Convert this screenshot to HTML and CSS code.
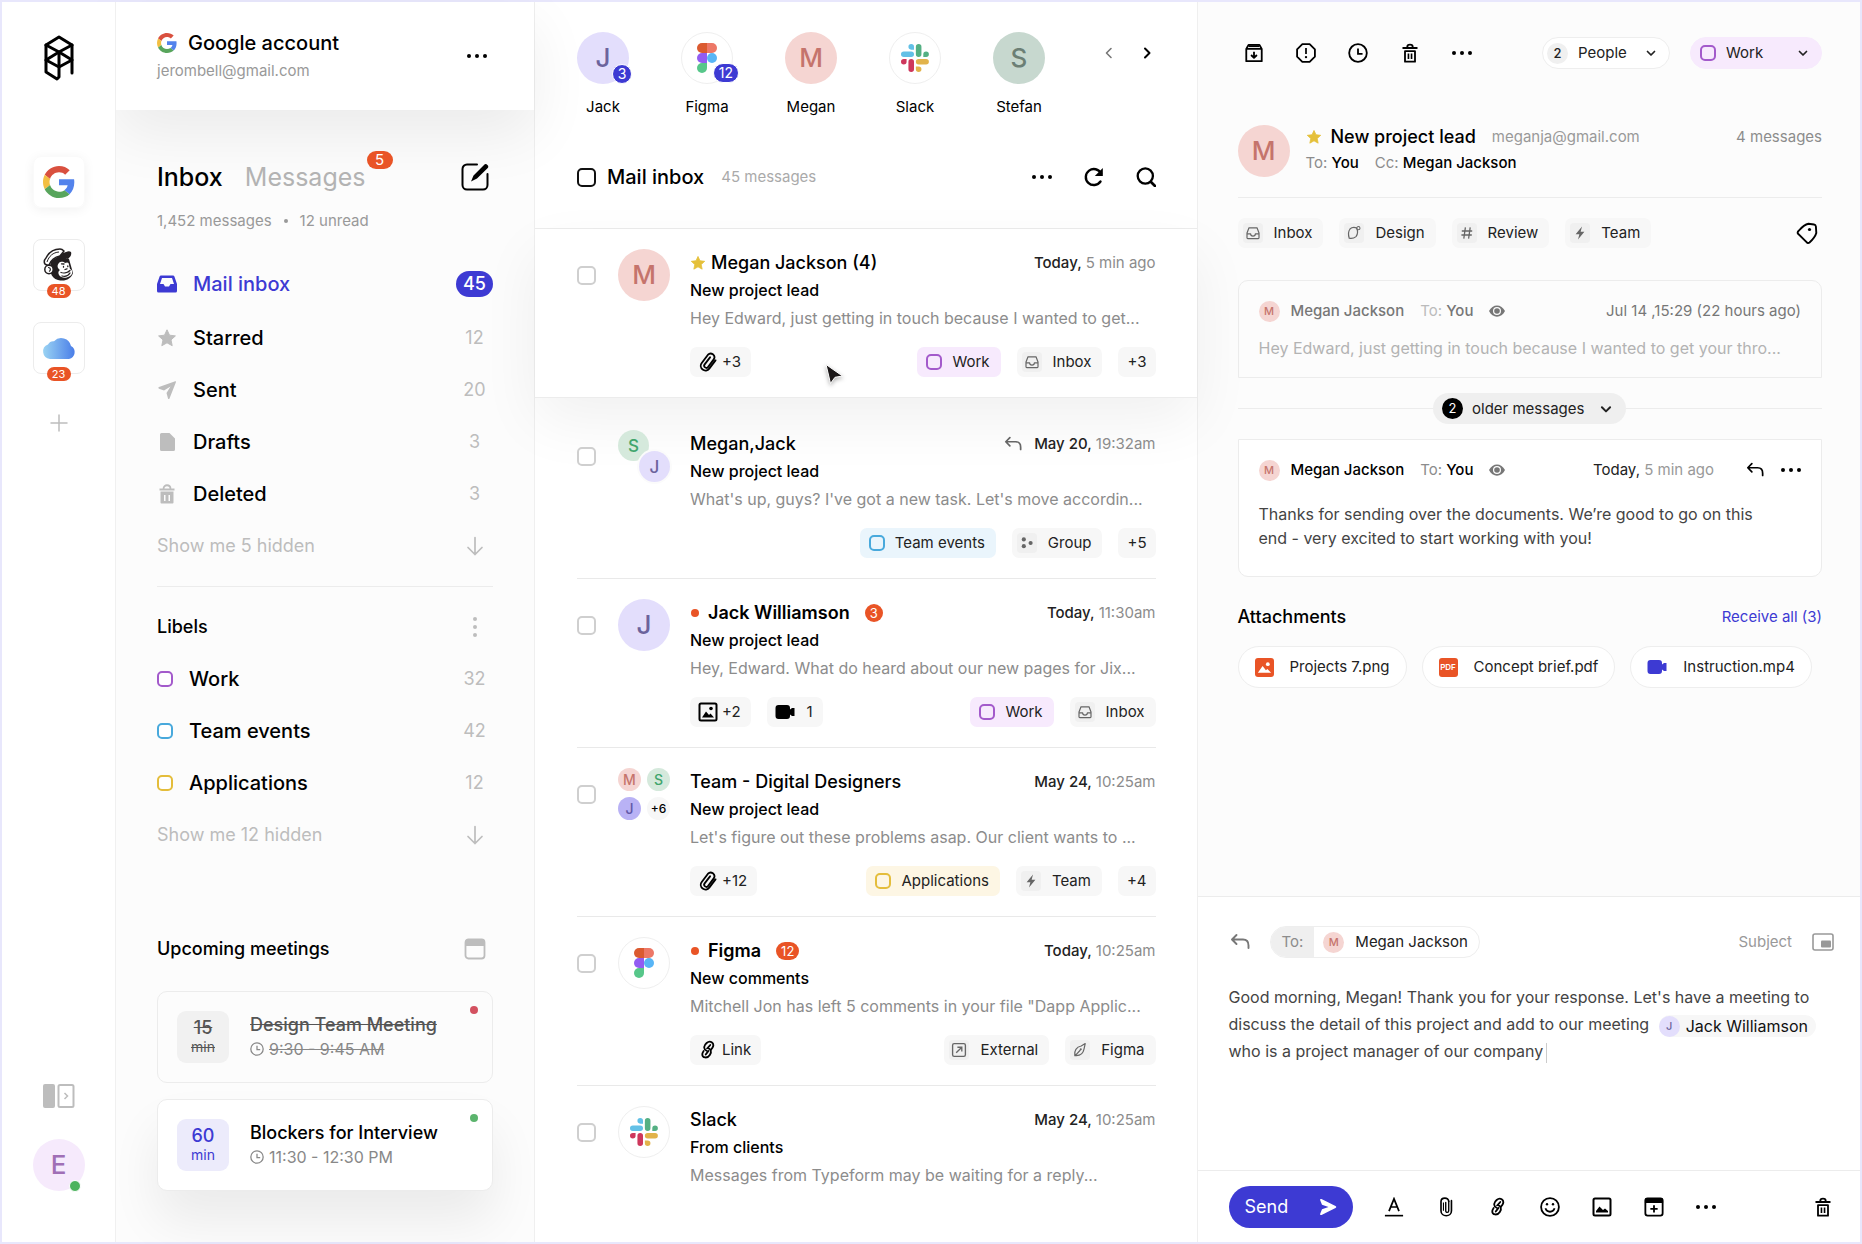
FILE: index.html
```
<!DOCTYPE html>
<html lang="en">
<head>
  <meta charset="UTF-8">
  <meta name="viewport" content="width=device-width, initial-scale=1">
  <title>Mail inbox</title>
  <link rel="stylesheet" href="styles.css">
</head>
<body>
  <!-- icon sprite -->
  <svg class="sprite" aria-hidden="true">
    <defs>
      <linearGradient id="cloudFill" x1="0" y1="0" x2="1" y2="0">
        <stop offset="0" stop-color="#9ad3f3"/>
        <stop offset="1" stop-color="#4a7ee8"/>
      </linearGradient>
    </defs>
    <symbol id="i-logo" viewBox="0 0 30 46">
      <g fill="none" stroke="#000" stroke-width="3" stroke-linecap="round" stroke-linejoin="round">
        <path d="M28 38V10L15 2 2 10v27l11 7 2-2V17"/>
        <path d="M2 10l13 7 13-7M2 25l13-8 13 8-13 7z"/>
      </g>
    </symbol>
    <symbol id="i-google" viewBox="0 0 48 48">
      <path fill="#d9503f" d="M24 9.5c3.54 0 6.71 1.22 9.21 3.6l6.85-6.85C35.9 2.38 30.47 0 24 0 14.62 0 6.51 5.38 2.56 13.22l7.98 6.19C12.43 13.72 17.74 9.5 24 9.5z"/>
      <path fill="#5383ec" d="M46.98 24.55c0-1.57-.15-3.09-.38-4.55H24v9.02h12.94c-.58 2.96-2.26 5.48-4.78 7.18l7.73 6c4.51-4.18 7.09-10.36 7.09-17.65z"/>
      <path fill="#f3bf42" d="M10.53 28.59c-.48-1.45-.76-2.99-.76-4.59s.27-3.14.76-4.59l-7.98-6.19C.92 16.46 0 20.12 0 24c0 3.88.92 7.54 2.56 10.78l7.97-6.19z"/>
      <path fill="#58a55c" d="M24 48c6.48 0 11.93-2.13 15.89-5.81l-7.73-6c-2.15 1.45-4.92 2.3-8.16 2.3-6.26 0-11.57-4.22-13.47-9.91l-7.98 6.19C6.51 42.62 14.62 48 24 48z"/>
    </symbol>
    <symbol id="i-mailchimp" viewBox="0 0 32 34">
      <path fill="#231f20" d="M8 13C6 21 7 30 15 32c7 2 13-1 15-7l-4-14-10-3z"/>
      <path fill="#fff" d="M16 15c2-2 5-1 6 0 2-1 4-1 4 2l1 4c3 1 3 5 0 7-4 3-9 2-11-1-1-2-1-4 1-5-3-2-3-5-1-7z"/>
      <path fill="none" stroke="#231f20" stroke-width="1.3" stroke-linecap="round" d="M18 24.500c3 1 7 0 9-2M19 28c3 1 6 0 8-3M20.500 18.500v.7M24.800 18v.7M22 21.500l2-.7M18.500 15.800l2.500.2"/>
      <circle cx="6" cy="21.500" r="4.200" fill="#fff" stroke="#231f20" stroke-width="1.500"/>
      <path fill="none" stroke="#231f20" stroke-width="1.200" d="M5 19.500c3 0 3 3 1 4"/>
      <path fill="#fff" stroke="#231f20" stroke-width="1.500" stroke-linejoin="round" d="M4 17C0 16 1 12 3 10 6 4 11 1 17 1c2 0 3 1 4 2l-4 5c-5 1-9 4-11 9z"/>
      <path fill="#231f20" d="M14 12c1-3 3-5 6-7 3-1 6-3 8-1 1 3-1 5-3 7-4-2-7-1-11 1z"/>
      <path fill="none" stroke="#231f20" stroke-width="1" d="M4 14C6 8 10 4.500 16 4"/>
    </symbol>
    <symbol id="i-cloud" viewBox="0 0 34 24">
      <path fill="url(#cloudFill)" d="M8 23a7.500 7.500 0 0 1-2-14.500A6 6 0 0 1 12 5.200 10 10 0 0 1 29 10a7 7 0 0 1-2 13z"/>
    </symbol>
    <symbol id="i-figma" viewBox="0 0 20 30">
      <path fill="#57c78a" d="M5 30a5 5 0 0 0 5-5v-5H5a5 5 0 0 0 0 10z"/>
      <path fill="#925cf2" d="M0 15a5 5 0 0 1 5-5h5v10H5a5 5 0 0 1-5-5z"/>
      <path fill="#db5a30" d="M0 5a5 5 0 0 1 5-5h5v10H5a5 5 0 0 1-5-5z"/>
      <path fill="#ed7867" d="M10 0h5a5 5 0 0 1 0 10h-5z"/>
      <circle cx="15" cy="15" r="5" fill="#58b5f6"/>
    </symbol>
    <symbol id="i-slack" viewBox="0 0 54 54">
      <path fill="#62c0e6" d="M19.712.133a5.381 5.381 0 0 0-5.376 5.387 5.381 5.381 0 0 0 5.376 5.386h5.376V5.52A5.381 5.381 0 0 0 19.712.133m0 14.365H5.376A5.381 5.381 0 0 0 0 19.884a5.381 5.381 0 0 0 5.376 5.387h14.336a5.381 5.381 0 0 0 5.376-5.387 5.381 5.381 0 0 0-5.376-5.386"/>
      <path fill="#54b083" d="M53.76 19.884a5.381 5.381 0 0 0-5.376-5.386 5.381 5.381 0 0 0-5.376 5.386v5.387h5.376a5.381 5.381 0 0 0 5.376-5.387m-14.336 0V5.52A5.381 5.381 0 0 0 34.048.133a5.381 5.381 0 0 0-5.376 5.387v14.364a5.381 5.381 0 0 0 5.376 5.387 5.381 5.381 0 0 0 5.376-5.387"/>
      <path fill="#e2b34b" d="M34.048 54a5.381 5.381 0 0 0 5.376-5.387 5.381 5.381 0 0 0-5.376-5.386h-5.376v5.386A5.381 5.381 0 0 0 34.048 54m0-14.365h14.336a5.381 5.381 0 0 0 5.376-5.386 5.381 5.381 0 0 0-5.376-5.387H34.048a5.381 5.381 0 0 0-5.376 5.387 5.381 5.381 0 0 0 5.376 5.386"/>
      <path fill="#ce375c" d="M0 34.249a5.381 5.381 0 0 0 5.376 5.386 5.381 5.381 0 0 0 5.376-5.386v-5.387H5.376A5.381 5.381 0 0 0 0 34.25m14.336-.001v14.364A5.381 5.381 0 0 0 19.712 54a5.381 5.381 0 0 0 5.376-5.387V34.25a5.381 5.381 0 0 0-5.376-5.387 5.381 5.381 0 0 0-5.376 5.387"/>
    </symbol>
    <symbol id="i-dots" viewBox="0 0 20 20">
      <g fill="currentColor"><circle cx="2" cy="10" r="2"/><circle cx="10" cy="10" r="2"/><circle cx="18" cy="10" r="2"/></g>
    </symbol>
    <symbol id="i-vdots" viewBox="0 0 20 20">
      <g fill="currentColor"><circle cx="10" cy="2" r="2"/><circle cx="10" cy="10" r="2"/><circle cx="10" cy="18" r="2"/></g>
    </symbol>
    <symbol id="i-plus" viewBox="0 0 18 18">
      <path d="M9 1v16M1 9h16" fill="none" stroke="currentColor" stroke-width="1.500" stroke-linecap="round"/>
    </symbol>
    <symbol id="i-panel" viewBox="0 0 32 24">
      <rect x="0" y="0" width="12" height="24" rx="2" fill="currentColor"/>
      <rect x="15.500" y="1" width="15" height="22" rx="1.500" fill="none" stroke="currentColor" stroke-width="2"/>
      <path d="M21.500 9l3 3-3 3" fill="none" stroke="currentColor" stroke-width="1.500"/>
    </symbol>
    <symbol id="i-compose" viewBox="0 0 28 28">
      <path d="M16 1.500H6A4.500 4.500 0 0 0 1.500 6v16A4.500 4.500 0 0 0 6 26.500h16a4.500 4.500 0 0 0 4.500-4.500V11" fill="none" stroke="#000" stroke-width="2" stroke-linecap="round"/>
      <path d="M10 18.500l2.500-6L23 2a2.300 2.300 0 0 1 3.500 3.300L16 15.500z" fill="#000"/>
    </symbol>
    <symbol id="i-inbox-solid" viewBox="0 0 20 18">
      <path fill="currentColor" fill-rule="evenodd" d="M4 .5h12a1.500 1.500 0 0 1 1.400 1L20 9v7a1.500 1.500 0 0 1-1.500 1.500h-17A1.500 1.500 0 0 1 0 16V9l2.600-7.500A1.500 1.500 0 0 1 4 .5zM5 3L3 9h3.500l1.500 2.500h4L13.500 9H17l-2-6z"/>
    </symbol>
    <symbol id="i-inbox" viewBox="0 0 20 20">
      <path d="M5 3.500h10l2.500 6.500v6a1 1 0 0 1-1 1h-13a1 1 0 0 1-1-1v-6zM2.500 11H7c0 4 6 4 6 0h4.500" fill="none" stroke="currentColor" stroke-width="1.500" stroke-linejoin="round"/>
    </symbol>
    <symbol id="i-star" viewBox="0 0 20 20">
      <path fill="currentColor" stroke="currentColor" stroke-linejoin="round" d="M10 1.800l2.500 5.400 5.900.7-4.400 4 1.200 5.800L10 14.800l-5.200 2.900L6 11.900l-4.400-4 5.900-.7z"/>
    </symbol>
    <symbol id="i-sent" viewBox="0 0 20 20">
      <path fill="currentColor" d="M18.200 1.200c.6-.2 1 .2.800.8l-6.500 16.500c-.3.700-1.200.7-1.500 0L9.500 13l4-6.500-6.500 4-5-1.800c-.8-.3-.8-1.300 0-1.600z"/>
    </symbol>
    <symbol id="i-draft" viewBox="0 0 20 20">
      <path fill="currentColor" d="M4.500 1h8L18 6.500v11a1.500 1.500 0 0 1-1.500 1.500h-12A1.500 1.500 0 0 1 3 17.500v-15A1.500 1.500 0 0 1 4.500 1z"/>
    </symbol>
    <symbol id="i-bin-solid" viewBox="0 0 20 20">
      <path d="M6.500 5c0-5 7-5 7 0M2.500 5.500h15" fill="none" stroke="currentColor" stroke-width="1.800"/>
      <path fill="currentColor" fill-rule="evenodd" d="M3.500 7.500h13v11a1 1 0 0 1-1 1h-11a1 1 0 0 1-1-1zM7 11v6h1.500v-6zm4.500 0v6H13v-6z"/>
    </symbol>
    <symbol id="i-bin" viewBox="0 0 20 22">
      <path d="M7 4.500C7 1 13 1 13 4.500M2.500 5.500h15M4.500 9v11.500h11V9z" fill="none" stroke="currentColor" stroke-width="2" stroke-linecap="round" stroke-linejoin="round"/>
      <path d="M8.300 11.500v6M11.700 11.500v6" stroke="currentColor" stroke-width="1.800"/>
    </symbol>
    <symbol id="i-down" viewBox="0 0 18 20">
      <path d="M9 1.500v17M2 11.500l7 7 7-7" fill="none" stroke="currentColor" stroke-width="1.700" stroke-linecap="round" stroke-linejoin="round"/>
    </symbol>
    <symbol id="i-calendar" viewBox="0 0 22 22">
      <rect x="1.500" y="1.500" width="19" height="19" rx="3" fill="none" stroke="currentColor" stroke-width="1.800"/>
      <path d="M1 8V4a3 3 0 0 1 3-3h14a3 3 0 0 1 3 3v4z" fill="currentColor"/>
    </symbol>
    <symbol id="i-clock" viewBox="0 0 22 22">
      <circle cx="11" cy="11" r="9.700" fill="none" stroke="currentColor" stroke-width="2"/>
      <path d="M11 6v6h5" fill="none" stroke="currentColor" stroke-width="2"/>
    </symbol>
    <symbol id="i-left" viewBox="0 0 18 18">
      <path d="M11 4.500L6.500 9l4.500 4.500" fill="none" stroke="#777" stroke-width="1.600" stroke-linecap="round" stroke-linejoin="round"/>
    </symbol>
    <symbol id="i-right" viewBox="0 0 18 18">
      <path d="M7 4.500L11.500 9 7 13.500" fill="none" stroke="currentColor" stroke-width="2" stroke-linecap="round" stroke-linejoin="round"/>
    </symbol>
    <symbol id="i-chevron" viewBox="0 0 12 12">
      <path d="M2.500 4.500L6 8l3.500-3.500" fill="none" stroke="currentColor" stroke-width="1.700" stroke-linecap="round" stroke-linejoin="round"/>
    </symbol>
    <symbol id="i-refresh" viewBox="0 0 20 20">
      <path d="M16.500 14.500A8 8 0 1 1 17 6.500" fill="none" stroke="currentColor" stroke-width="2.400" stroke-linecap="round"/>
      <path d="M18.800 1v8h-8z" fill="currentColor"/>
    </symbol>
    <symbol id="i-search" viewBox="0 0 20 20">
      <circle cx="9.300" cy="9" r="7.600" fill="none" stroke="currentColor" stroke-width="2.300"/>
      <path d="M15 15l4 4" stroke="currentColor" stroke-width="2.600" stroke-linecap="round"/>
    </symbol>
    <symbol id="i-clip" viewBox="0 0 24 24">
      <path transform="rotate(-8 12 12)" d="M21.200 11.300l-8.800 8.800a5.600 5.600 0 0 1-8-8l8.800-8.800a4.500 4.500 0 0 1 6.300 6.300l-8.300 8.300a2.500 2.500 0 0 1-3.600-3.600l7.600-7.500" fill="none" stroke="currentColor" stroke-width="2.200" stroke-linecap="round" stroke-linejoin="round"/>
    </symbol>
    <symbol id="i-clip-straight" viewBox="0 0 20 22">
      <path d="M13 4.500V15c0 2.600-3.300 2.600-3.300 0V6" fill="none" stroke="currentColor" stroke-width="1.500" stroke-linecap="round"/>
      <path d="M13 5c0-5-8.500-5-8.500 0v10c0 7.500 11.500 7.500 11.500 0V4" fill="none" stroke="currentColor" stroke-width="1.800" stroke-linecap="round"/>
      <path d="M7.200 6v9" stroke="currentColor" stroke-width="1.200"/>
    </symbol>
    <symbol id="i-link" viewBox="0 0 20 22">
      <path d="M8.500 11.800C4 9.500 6 5.500 8.500 3.300c4-3.500 8.500 0 7 4-.4 1.200-1.200 2.200-2.200 3.200" fill="none" stroke="currentColor" stroke-width="2" stroke-linecap="round"/>
      <path d="M12.500 5.500L9.500 9c3.500.5 5 3.500 2.500 7.500-2.500 4-8.500 3.500-8.300-1 .1-1.500.8-2.500 1.500-3.500M7.500 16l3-4" fill="none" stroke="currentColor" stroke-width="2" stroke-linecap="round"/>
    </symbol>
    <symbol id="i-image" viewBox="0 0 20 20">
      <rect x="1.500" y="1.500" width="17" height="17" rx="1.500" fill="none" stroke="currentColor" stroke-width="2"/>
      <path d="M4 15.500l4-6 3 3.500 1.500-1.500 3.500 4z" fill="currentColor"/>
      <circle cx="13" cy="6.500" r="1.800" fill="currentColor"/>
    </symbol>
    <symbol id="i-picture" viewBox="0 0 20 20">
      <rect x="1.500" y="1.500" width="17" height="17" rx="1.500" fill="none" stroke="currentColor" stroke-width="2"/>
      <path d="M4 15.500V14l3.500-4.500L11 13l2-1.500 3 2.500v1.500z" fill="currentColor"/>
    </symbol>
    <symbol id="i-video" viewBox="0 0 20 16">
      <path d="M3.500 1h8.500a3 3 0 0 1 3 3v1.500l2-1.500h2.500v8H17l-2-1.500V12a3 3 0 0 1-3 3H3.500a3 3 0 0 1-3-3V4a3 3 0 0 1 3-3z" fill="currentColor"/>
    </symbol>
    <symbol id="i-group" viewBox="0 0 20 20">
      <g fill="currentColor"><circle cx="6" cy="5.500" r="2.600"/><circle cx="6" cy="14" r="2.600"/><circle cx="14.500" cy="10" r="2.600"/></g>
    </symbol>
    <symbol id="i-bolt" viewBox="0 0 20 20">
      <path d="M12.500 2L4.500 11.500h4.700L7.500 18l8-9.500h-4.700z" fill="currentColor"/>
    </symbol>
    <symbol id="i-external" viewBox="0 0 20 20">
      <rect x="2" y="2" width="16" height="16" rx="2" fill="none" stroke="currentColor" stroke-width="1.700"/>
      <path d="M6.500 13.500l7-7M8 6.500h5.500V12" fill="none" stroke="currentColor" stroke-width="1.700"/>
    </symbol>
    <symbol id="i-pen" viewBox="0 0 20 20">
      <path d="M3.500 17c-1-6 2-11 8-12l5-3-1.500 7c-1 5-4 8-9.500 8zM4 17l6.500-7" fill="none" stroke="currentColor" stroke-width="1.500" stroke-linejoin="round"/>
      <circle cx="11" cy="9" r="1.300" fill="currentColor"/>
    </symbol>
    <symbol id="i-planet" viewBox="0 0 20 20">
      <path d="M5 5c2-2 6-2 8-1.500 2 3 2 8-.5 11-2.500 2-6 2.500-8.500 2-1-3.500-1-9 1-11.500z" fill="none" stroke="currentColor" stroke-width="1.500"/>
      <circle cx="15.500" cy="4" r="2" fill="none" stroke="currentColor" stroke-width="1.300"/>
    </symbol>
    <symbol id="i-hash" viewBox="0 0 20 20">
      <path d="M8 3L6 17M14 3l-2 14M3.500 7.500h13M3 12.500h13" fill="none" stroke="currentColor" stroke-width="1.600"/>
    </symbol>
    <symbol id="i-reply" viewBox="0 0 20 18">
      <path d="M6.500 2L2 6.500 6.500 11M2.500 6.500H13c3.500 0 5.500 2.500 5.500 6V15" fill="none" stroke="currentColor" stroke-width="1.900" stroke-linecap="round" stroke-linejoin="round"/>
    </symbol>
    <symbol id="i-archive" viewBox="0 0 20 22">
      <path d="M1.500 6.500L4 2h12l2.500 4.500V20h-17zM2 6.500h16M10 9.500v6.500M6.800 13.200L10 16.400l3.200-3.200" fill="none" stroke="currentColor" stroke-width="2" stroke-linejoin="round"/>
      <path d="M4 3.500h12" stroke="currentColor" stroke-width="2"/>
    </symbol>
    <symbol id="i-alert" viewBox="0 0 22 22">
      <path d="M7 1.200h8L20.800 7v8L15 20.800H7L1.200 15V7z" fill="none" stroke="currentColor" stroke-width="2" stroke-linejoin="round"/>
      <path d="M11 5.500V12" stroke="currentColor" stroke-width="1.900"/>
      <circle cx="11" cy="15.500" r="1.300" fill="currentColor"/>
    </symbol>
    <symbol id="i-tag" viewBox="0 0 22 22">
      <path d="M3 8.500C6 5 9 2.500 12.500 1.800l5.500.7c1.300.2 1.800 1 1.900 2l.4 6.500c-1 3.500-3.500 6.500-6.800 9.500-1 .8-2 .7-2.700-.2L1.800 11.500c-.5-1.500.2-2.300 1.200-3z" fill="none" stroke="currentColor" stroke-width="1.900"/>
      <circle cx="13.500" cy="7.500" r="1.600" fill="currentColor"/>
    </symbol>
    <symbol id="i-eye" viewBox="0 0 16 12">
      <path fill="currentColor" fill-rule="evenodd" d="M0 6c3.500-7.500 12.500-7.500 16 0-3.500 7.500-12.500 7.500-16 0zm8-4a4 4 0 1 0 0 8 4 4 0 0 0 0-8z"/>
      <circle cx="8" cy="6" r="2.800" fill="currentColor"/>
    </symbol>
    <symbol id="i-pip" viewBox="0 0 22 18">
      <rect x="1" y="1" width="20" height="16" rx="2" fill="none" stroke="currentColor" stroke-width="1.600"/>
      <rect x="9" y="7.500" width="10" height="7" rx="1" fill="currentColor"/>
    </symbol>
    <symbol id="i-plane" viewBox="0 0 18 18">
      <path fill="currentColor" d="M1.200 2.200C.8 1.200 1.700.7 2.500 1L16.500 8c1 .5 1 1.500 0 2L2.500 17c-.8.300-1.700-.2-1.300-1.200L3 11.200 9.500 9 3 6.800z"/>
    </symbol>
    <symbol id="i-format" viewBox="0 0 20 22">
      <path d="M4.500 15.500L10 2l5.500 13.500M6.300 11h7.400" fill="none" stroke="currentColor" stroke-width="1.900"/>
      <path d="M0 20.500h20" stroke="currentColor" stroke-width="1.800"/>
    </symbol>
    <symbol id="i-smile" viewBox="0 0 22 22">
      <circle cx="11" cy="11" r="9.800" fill="none" stroke="currentColor" stroke-width="2"/>
      <path d="M6 12.500c1.500 5 8.500 5 10 0" fill="none" stroke="currentColor" stroke-width="2"/>
      <circle cx="7.700" cy="8" r="1.300" fill="currentColor"/><circle cx="14.300" cy="8" r="1.300" fill="currentColor"/>
    </symbol>
    <symbol id="i-event" viewBox="0 0 22 22">
      <rect x="1.500" y="1.500" width="19" height="19" rx="2.500" fill="none" stroke="currentColor" stroke-width="2"/>
      <path d="M1 6.500V3a2 2 0 0 1 2-2h16a2 2 0 0 1 2 2v3.500z" fill="currentColor"/>
      <path d="M11 9v8M7 13h8" stroke="currentColor" stroke-width="2"/>
    </symbol>
  </svg>

  <div class="app">
    <aside class="rail">
      <svg class="rail-logo"><use href="#i-logo"/></svg>
      <nav class="rail-accounts" aria-label="Accounts">
        <a href="#" class="rail-box active" aria-label="Google"><svg class="ic-google"><use href="#i-google"/></svg></a>
        <a href="#" class="rail-box" aria-label="Mailchimp"><svg class="ic-chimp"><use href="#i-mailchimp"/></svg><span class="rail-badge">48</span></a>
        <a href="#" class="rail-box" aria-label="iCloud"><svg class="ic-cloud"><use href="#i-cloud"/></svg><span class="rail-badge">23</span></a>
      </nav>
      <button class="icon-btn muted" aria-label="Add account"><svg class="ic-18"><use href="#i-plus"/></svg></button>
      <div class="rail-bottom">
        <button class="icon-btn muted" aria-label="Toggle panel"><svg class="ic-panel"><use href="#i-panel"/></svg></button>
        <div class="avatar av-e">E<span class="online"></span></div>
      </div>
    </aside>

    <section class="sidebar">
      <header class="account">
        <div>
          <h2 class="account-name"><svg class="ic-20"><use href="#i-google"/></svg>Google account</h2>
          <p class="account-mail">jerombell@gmail.com</p>
        </div>
        <button class="icon-btn account-more" aria-label="Account options"><svg class="ic-20"><use href="#i-dots"/></svg></button>
      </header>

      <div class="sidebar-body">
        <div class="tabs">
          <a href="#" class="tab active">Inbox</a>
          <a href="#" class="tab">Messages<span class="tab-badge">5</span></a>
          <button class="icon-btn side-end" aria-label="Compose"><svg class="ic-28"><use href="#i-compose"/></svg></button>
        </div>
        <p class="meta">1,452 messages<span class="meta-dot"></span>12 unread</p>

        <nav class="folders">
          <a href="#" class="row active"><svg class="ic-20"><use href="#i-inbox-solid"/></svg><span>Mail inbox</span><b class="count">45</b></a>
          <a href="#" class="row"><svg class="ic-20"><use href="#i-star"/></svg><span>Starred</span><b class="count">12</b></a>
          <a href="#" class="row"><svg class="ic-20"><use href="#i-sent"/></svg><span>Sent</span><b class="count">20</b></a>
          <a href="#" class="row"><svg class="ic-20"><use href="#i-draft"/></svg><span>Drafts</span><b class="count">3</b></a>
          <a href="#" class="row"><svg class="ic-20"><use href="#i-bin-solid"/></svg><span>Deleted</span><b class="count">3</b></a>
          <button class="row show-more"><span>Show me 5 hidden</span><span class="count"><svg class="ic-20"><use href="#i-down"/></svg></span></button>
        </nav>

        <div class="section-head labels-head">
          <h3>Libels</h3>
          <button class="icon-btn muted side-end" aria-label="Label options"><svg class="ic-20"><use href="#i-vdots"/></svg></button>
        </div>
        <nav class="labels">
          <a href="#" class="row"><i class="sq work"></i><span>Work</span><b class="count">32</b></a>
          <a href="#" class="row"><i class="sq events"></i><span>Team events</span><b class="count">42</b></a>
          <a href="#" class="row"><i class="sq apps"></i><span>Applications</span><b class="count">12</b></a>
          <button class="row show-more"><span>Show me 12 hidden</span><span class="count"><svg class="ic-20"><use href="#i-down"/></svg></span></button>
        </nav>

        <div class="meetings">
          <div class="section-head">
            <h3>Upcoming meetings</h3>
            <button class="icon-btn muted side-end" aria-label="Calendar"><svg class="ic-22"><use href="#i-calendar"/></svg></button>
          </div>
          <article class="meeting done">
            <div class="tile"><b>15</b><span>min</span></div>
            <div>
              <h4>Design Team Meeting</h4>
              <p><svg class="ic-14"><use href="#i-clock"/></svg><span>9:30 - 9:45 AM</span></p>
            </div>
            <span class="status red"></span>
          </article>
          <article class="meeting next">
            <div class="tile"><b>60</b><span>min</span></div>
            <div>
              <h4>Blockers for Interview</h4>
              <p><svg class="ic-14"><use href="#i-clock"/></svg><span>11:30 - 12:30 PM</span></p>
            </div>
            <span class="status green"></span>
          </article>
        </div>
      </div>
    </section>

    <main class="list">
      <div class="list-top">
        <div class="contacts">
          <a href="#" class="contact"><span class="avatar av-j">J<b class="av-count">3</b></span>Jack</a>
          <a href="#" class="contact"><span class="avatar av-logo"><svg class="ic-figma"><use href="#i-figma"/></svg><b class="av-count wide">12</b></span>Figma</a>
          <a href="#" class="contact"><span class="avatar av-m">M</span>Megan</a>
          <a href="#" class="contact"><span class="avatar av-logo"><svg class="ic-28"><use href="#i-slack"/></svg></span>Slack</a>
          <a href="#" class="contact"><span class="avatar av-s">S</span>Stefan</a>
          <div class="pager">
            <button class="icon-btn" aria-label="Previous"><svg class="ic-18"><use href="#i-left"/></svg></button>
            <button class="icon-btn" aria-label="Next"><svg class="ic-18"><use href="#i-right"/></svg></button>
          </div>
        </div>
        <div class="list-bar">
          <input type="checkbox" class="check dark" id="checkAll">
          <label for="checkAll" class="list-title">Mail inbox</label>
          <span class="list-count">45 messages</span>
          <div class="list-tools">
            <button class="icon-btn" aria-label="More"><svg class="ic-20"><use href="#i-dots"/></svg></button>
            <button class="icon-btn" aria-label="Refresh"><svg class="ic-20"><use href="#i-refresh"/></svg></button>
            <button class="icon-btn" aria-label="Search"><svg class="ic-20"><use href="#i-search"/></svg></button>
          </div>
        </div>
      </div>

      <article class="mail selected">
        <div class="mail-in">
          <div class="mail-lead">
            <input type="checkbox" class="check" aria-label="Select Megan Jackson">
            <span class="avatar av-m">M</span>
          </div>
          <div class="mail-body">
            <div class="mail-head">
              <h3><svg class="ic-star"><use href="#i-star"/></svg>Megan Jackson (4)</h3>
              <p class="when"><b>Today,</b> 5 min ago</p>
            </div>
            <p class="subject">New project lead</p>
            <p class="preview">Hey Edward, just getting in touch because I wanted to get...</p>
            <div class="chips">
              <span class="chip files"><svg class="ic-20"><use href="#i-clip"/></svg>+3</span>
              <span class="chip-gap"></span>
              <span class="chip label-work"><i class="sq work"></i>Work</span>
              <span class="chip tag"><svg><use href="#i-inbox"/></svg>Inbox</span>
              <span class="chip more">+3</span>
            </div>
          </div>
        </div>
        <svg class="cursor" viewBox="0 0 20 24"><path d="M2 1.500l16.500 11.500-7.500 1.300L6.500 20.500z" fill="#1b1718" stroke="#fff" stroke-width="1" stroke-linejoin="round"/></svg>
      </article>

      <article class="mail after-selected">
        <div class="mail-in">
          <div class="mail-lead">
            <input type="checkbox" class="check" aria-label="Select Megan, Jack">
            <span class="duo"><span class="avatar md av-g">S</span><span class="avatar md av-j">J</span></span>
          </div>
          <div class="mail-body">
            <div class="mail-head">
              <h3>Megan,Jack</h3>
              <p class="when"><svg class="ic-reply"><use href="#i-reply"/></svg><b>May 20,</b> 19:32am</p>
            </div>
            <p class="subject">New project lead</p>
            <p class="preview">What's up, guys? I've got a new task. Let's move accordin...</p>
            <div class="chips">
              <span class="chip-gap"></span>
              <span class="chip label-events"><i class="sq events"></i>Team events</span>
              <span class="chip tag"><svg><use href="#i-group"/></svg>Group</span>
              <span class="chip more">+5</span>
            </div>
          </div>
        </div>
      </article>

      <article class="mail">
        <div class="mail-in">
          <div class="mail-lead">
            <input type="checkbox" class="check" aria-label="Select Jack Williamson">
            <span class="avatar av-j">J</span>
          </div>
          <div class="mail-body">
            <div class="mail-head unread">
              <h3><i class="new-dot"></i>Jack Williamson<span class="new-count">3</span></h3>
              <p class="when"><b>Today,</b> 11:30am</p>
            </div>
            <p class="subject">New project lead</p>
            <p class="preview">Hey, Edward. What do heard about our new pages for Jix...</p>
            <div class="chips">
              <span class="chip files"><svg class="ic-20"><use href="#i-image"/></svg>+2</span>
              <span class="chip files wide"><svg class="ic-20"><use href="#i-video"/></svg>1</span>
              <span class="chip-gap"></span>
              <span class="chip label-work"><i class="sq work"></i>Work</span>
              <span class="chip tag"><svg><use href="#i-inbox"/></svg>Inbox</span>
            </div>
          </div>
        </div>
      </article>

      <article class="mail">
        <div class="mail-in">
          <div class="mail-lead">
            <input type="checkbox" class="check" aria-label="Select Team - Digital Designers">
            <span class="quad"><span class="avatar sm av-m">M</span><span class="avatar sm av-g">S</span><span class="avatar sm av-v">J</span><span class="avatar sm av-more">+6</span></span>
          </div>
          <div class="mail-body">
            <div class="mail-head">
              <h3>Team - Digital Designers</h3>
              <p class="when"><b>May 24,</b> 10:25am</p>
            </div>
            <p class="subject">New project lead</p>
            <p class="preview">Let's figure out these problems asap. Our client wants to ...</p>
            <div class="chips">
              <span class="chip files"><svg class="ic-20"><use href="#i-clip"/></svg>+12</span>
              <span class="chip-gap"></span>
              <span class="chip label-apps"><i class="sq apps"></i>Applications</span>
              <span class="chip tag"><svg><use href="#i-bolt"/></svg>Team</span>
              <span class="chip more">+4</span>
            </div>
          </div>
        </div>
      </article>

      <article class="mail">
        <div class="mail-in">
          <div class="mail-lead">
            <input type="checkbox" class="check" aria-label="Select Figma">
            <span class="avatar av-logo"><svg class="ic-figma"><use href="#i-figma"/></svg></span>
          </div>
          <div class="mail-body">
            <div class="mail-head unread">
              <h3><i class="new-dot"></i>Figma<span class="new-count">12</span></h3>
              <p class="when"><b>Today,</b> 10:25am</p>
            </div>
            <p class="subject">New comments</p>
            <p class="preview">Mitchell Jon has left 5 comments in your file "Dapp Applic...</p>
            <div class="chips">
              <span class="chip files"><svg class="ic-20"><use href="#i-link"/></svg>Link</span>
              <span class="chip-gap"></span>
              <span class="chip tag"><svg><use href="#i-external"/></svg>External</span>
              <span class="chip tag"><svg><use href="#i-pen"/></svg>Figma</span>
            </div>
          </div>
        </div>
      </article>

      <article class="mail">
        <div class="mail-in">
          <div class="mail-lead">
            <input type="checkbox" class="check" aria-label="Select Slack">
            <span class="avatar av-logo"><svg class="ic-28"><use href="#i-slack"/></svg></span>
          </div>
          <div class="mail-body">
            <div class="mail-head">
              <h3>Slack</h3>
              <p class="when"><b>May 24,</b> 10:25am</p>
            </div>
            <p class="subject">From clients</p>
            <p class="preview">Messages from Typeform may be waiting for a reply...</p>
          </div>
        </div>
      </article>
    </main>

    <section class="detail">
      <div class="thread">
        <div class="thread-tools">
          <div class="tools">
            <button class="icon-btn" aria-label="Archive"><svg class="ic-20"><use href="#i-archive"/></svg></button>
            <button class="icon-btn" aria-label="Report"><svg class="ic-20"><use href="#i-alert"/></svg></button>
            <button class="icon-btn" aria-label="Snooze"><svg class="ic-20"><use href="#i-clock"/></svg></button>
            <button class="icon-btn" aria-label="Delete"><svg class="ic-20"><use href="#i-bin"/></svg></button>
            <button class="icon-btn" aria-label="More"><svg class="ic-20"><use href="#i-dots"/></svg></button>
          </div>
          <div class="pick">
            <span class="pick-count">2</span>
            <select aria-label="People"><option>People</option></select>
            <svg class="pick-arrow"><use href="#i-chevron"/></svg>
          </div>
          <div class="pick pick-work">
            <i class="sq work"></i>
            <select aria-label="Label"><option>Work</option></select>
            <svg class="pick-arrow"><use href="#i-chevron"/></svg>
          </div>
        </div>

        <header class="thread-head">
          <span class="avatar av-m">M</span>
          <div class="thread-info">
            <div class="thread-title">
              <svg class="ic-star"><use href="#i-star"/></svg>
              <h2>New project lead</h2>
              <span class="grey">meganja@gmail.com</span>
              <span class="thread-count">4 messages</span>
            </div>
            <p class="thread-to"><span>To: <b>You</b></span><span>Cc: <b>Megan Jackson</b></span></p>
          </div>
        </header>

        <div class="thread-tags">
          <span class="chip tag"><svg><use href="#i-inbox"/></svg>Inbox</span>
          <span class="chip tag"><svg><use href="#i-planet"/></svg>Design</span>
          <span class="chip tag"><svg><use href="#i-hash"/></svg>Review</span>
          <span class="chip tag"><svg><use href="#i-bolt"/></svg>Team</span>
          <button class="icon-btn tag-btn" aria-label="Add tag"><svg class="ic-22"><use href="#i-tag"/></svg></button>
        </div>

        <article class="msg old">
          <div class="msg-head">
            <span class="avatar xs av-m">M</span><b>Megan Jackson</b><span class="msg-to">To: <b>You</b></span>
            <svg class="ic-eye"><use href="#i-eye"/></svg>
            <span class="msg-when">Jul 14 ,15:29 (22 hours ago)</span>
          </div>
          <p class="msg-text one-line">Hey Edward, just getting in touch because I wanted to get your thro...</p>
        </article>

        <div class="older">
          <button class="older-btn"><span class="older-count">2</span>older messages<svg class="ic-14"><use href="#i-chevron"/></svg></button>
        </div>

        <article class="msg latest">
          <div class="msg-head">
            <span class="avatar xs av-m">M</span><b>Megan Jackson</b><span class="msg-to">To: <b>You</b></span>
            <svg class="ic-eye"><use href="#i-eye"/></svg>
            <span class="msg-when"><b>Today,</b> 5 min ago</span>
            <div class="msg-actions">
              <button class="icon-btn" aria-label="Reply"><svg class="ic-18"><use href="#i-reply"/></svg></button>
              <button class="icon-btn" aria-label="More"><svg class="ic-20"><use href="#i-dots"/></svg></button>
            </div>
          </div>
          <p class="msg-text">Thanks for sending over the documents. We’re good to go on this end - very excited to start working with you!</p>
        </article>

        <div class="files-head">
          <h3>Attachments</h3>
          <a href="#">Receive all (3)</a>
        </div>
        <div class="files">
          <a href="#" class="file"><span class="file-ic"><svg viewBox="0 0 20 20"><path d="M3 15.500l5-7 3.500 4.500L13 11.500l4 4z" fill="#fff"/><circle cx="13.500" cy="6.500" r="2" fill="#fff"/></svg></span>Projects 7.png</a>
          <a href="#" class="file"><span class="file-ic">PDF</span>Concept brief.pdf</a>
          <a href="#" class="file"><svg class="file-video"><use href="#i-video"/></svg>Instruction.mp4</a>
        </div>
      </div>

      <form class="composer">
        <div class="composer-head">
          <button type="button" class="icon-btn reply-btn" aria-label="Reply"><svg class="ic-20"><use href="#i-reply"/></svg></button>
          <span class="to-pill"><span class="to-label">To:</span><span class="to-name"><span class="avatar xs av-m">M</span>Megan Jackson</span></span>
          <input type="text" class="subject-input" placeholder="Subject" aria-label="Subject">
          <button type="button" class="icon-btn grey" aria-label="Pop out"><svg class="ic-22"><use href="#i-pip"/></svg></button>
        </div>
        <div class="editor" contenteditable="true" role="textbox" aria-label="Message" aria-multiline="true" spellcheck="false">Good morning, Megan! Thank you for your response. Let's have a meeting to discuss the detail of this project and add to our meeting <span class="mention"><span class="avatar xs av-j">J</span>Jack Williamson</span> who is a project manager of our company<span class="caret"></span></div>
        <div class="composer-bar">
          <button type="submit" class="send">Send<svg class="ic-18"><use href="#i-plane"/></svg></button>
          <div class="tools">
            <button type="button" class="icon-btn" aria-label="Text style"><svg class="ic-20"><use href="#i-format"/></svg></button>
            <button type="button" class="icon-btn" aria-label="Attach"><svg class="ic-20"><use href="#i-clip-straight"/></svg></button>
            <button type="button" class="icon-btn" aria-label="Link"><svg class="ic-20"><use href="#i-link"/></svg></button>
            <button type="button" class="icon-btn" aria-label="Emoji"><svg class="ic-20"><use href="#i-smile"/></svg></button>
            <button type="button" class="icon-btn" aria-label="Image"><svg class="ic-20"><use href="#i-picture"/></svg></button>
            <button type="button" class="icon-btn" aria-label="Event"><svg class="ic-20"><use href="#i-event"/></svg></button>
            <button type="button" class="icon-btn" aria-label="More"><svg class="ic-20"><use href="#i-dots"/></svg></button>
          </div>
          <button type="button" class="icon-btn discard" aria-label="Discard"><svg class="ic-20"><use href="#i-bin"/></svg></button>
        </div>
      </form>
    </section>
  </div>
</body>
</html>
```
FILE: styles.css
```
* {
  box-sizing: border-box;
}

body {
  margin: 0;
  font-family: Inter, "Liberation Sans", sans-serif;
  font-size: 15px;
  line-height: 24px;
  color: #000;
  background: #fff;
}

h2, h3, h4, p {
  margin: 0;
  font-weight: 500;
}

p {
  font-weight: 400;
}

b {
  font-weight: 500;
}

a {
  color: inherit;
  text-decoration: none;
}

svg {
  display: block;
  flex-shrink: 0;
}

button, input, select {
  font: inherit;
  color: inherit;
}

button {
  padding: 0;
  border: none;
  background: none;
  cursor: pointer;
}

.sprite {
  position: absolute;
  width: 0;
  height: 0;
}

/* icon sizes */
.ic-14 { width: 14px; height: 14px; }
.ic-18 { width: 18px; height: 18px; }
.ic-20 { width: 20px; height: 20px; }
.ic-22 { width: 22px; height: 22px; }
.ic-28 { width: 28px; height: 28px; }
.ic-figma { width: 22px; height: 30px; }
.ic-google { width: 32px; height: 32px; }
.ic-chimp { width: 32px; height: 34px; }
.ic-cloud { width: 34px; height: 24px; }
.ic-panel { width: 32px; height: 24px; }
.ic-eye { width: 16px; height: 12px; color: #777; }
.ic-star { width: 16px; height: 16px; color: #e5c03a; }
.ic-reply { width: 18px; height: 18px; color: #666; }

.icon-btn {
  display: flex;
  align-items: center;
  justify-content: center;
}

.muted { color: #bdbdbd; }
.grey { color: #999; }

.app {
  display: grid;
  grid-template-columns: 114px 419px minmax(0, 1fr) minmax(0, 1fr);
  min-height: 100vh;
  border: 2px solid #e8e7fc;
}

/* avatars */
.avatar {
  position: relative;
  display: flex;
  align-items: center;
  justify-content: center;
  flex-shrink: 0;
  width: 52px;
  height: 52px;
  border-radius: 50%;
  font-size: 26px;
  font-weight: 500;
}

.avatar.md { width: 31px; height: 31px; font-size: 17px; }
.avatar.sm { width: 23px; height: 23px; font-size: 14px; }
.avatar.xs { width: 21px; height: 21px; font-size: 11px; }

.av-j { background: #e3defc; color: #6c639c; }
.av-m { background: #f5d5d2; color: #c5746c; }
.av-s { background: #c7d8cf; color: #6c7f75; }
.av-g { background: #d5e9dc; color: #40a56c; }
.av-v { background: #b9b2f5; color: #6158a8; }
.av-e { background: #f6eafc; color: #a06fb6; }
.av-logo { background: #fff; border: 1px solid #efefef; }

.avatar.av-more {
  background: #f7f7f7;
  font-size: 12px;
}

.av-count {
  position: absolute;
  right: -3px;
  bottom: 0;
  min-width: 20px;
  padding: 0 4px;
  border: 1px solid #fff;
  border-radius: 10px;
  background: #3d3ad3;
  color: #fff;
  font-size: 14px;
  font-weight: 400;
  line-height: 18px;
  text-align: center;
}

.av-count.wide {
  right: -7px;
  padding: 0 5px;
}

/* label squares */
.sq {
  flex-shrink: 0;
  width: 16px;
  height: 16px;
  border: 2px solid;
  border-radius: 5px;
  background: #fff;
}

.sq.work { border-color: #a35acb; }
.sq.events { border-color: #48a9dc; }
.sq.apps { border-color: #e4bd3b; }

/* checkbox */
.check {
  appearance: none;
  flex-shrink: 0;
  width: 19px;
  height: 19px;
  margin: 0;
  border: 2px solid #cfcfcf;
  border-radius: 5px;
  background: #fff;
}

.check.dark {
  border-color: #111;
}

.check:checked {
  background: #3d3ad3;
}

/* rail */
.rail {
  position: relative;
  z-index: 3;
  display: flex;
  flex-direction: column;
  align-items: center;
  padding: 33px 0 51px;
  border-right: 1px solid #f0f0f0;
  background: #fff;
}

.rail-logo {
  width: 30px;
  height: 46px;
}

.rail-accounts {
  display: flex;
  flex-direction: column;
  gap: 31px;
  margin: 75px 0 40px;
}

.rail-box {
  position: relative;
  display: flex;
  align-items: center;
  justify-content: center;
  width: 52px;
  height: 52px;
  border: 1px solid #ececec;
  border-radius: 8px;
}

.rail-box.active {
  border-color: #fafafa;
  box-shadow: 0 2px 12px rgba(0, 0, 0, 0.06);
}

.rail-badge {
  position: absolute;
  left: 13px;
  bottom: -8px;
  width: 24px;
  border-radius: 7px;
  background: #e95426;
  color: #fff;
  font-size: 11px;
  line-height: 14px;
  text-align: center;
}

.rail-bottom {
  display: flex;
  flex-direction: column;
  align-items: center;
  gap: 31px;
  margin-top: auto;
}

.online {
  position: absolute;
  right: 4px;
  bottom: -1px;
  width: 12px;
  height: 12px;
  border: 1px solid #fff;
  border-radius: 50%;
  background: #4cb35d;
}

/* sidebar */
.sidebar {
  display: flex;
  flex-direction: column;
  border-right: 1px solid #efefef;
  background: #fcfcfc;
}

.account {
  position: relative;
  z-index: 2;
  display: flex;
  align-items: center;
  justify-content: space-between;
  padding: 27px 41px;
  background: #fff;
  box-shadow: 0 24px 60px rgba(0, 0, 0, 0.07);
}

.account-name {
  display: flex;
  align-items: center;
  gap: 11px;
  font-size: 20px;
  line-height: 28px;
}

.account-mail {
  margin-top: 2px;
  color: #999;
}

.account-more {
  margin-right: 6px;
}

.sidebar-body {
  position: relative;
  z-index: 2;
  flex: 1;
  display: flex;
  flex-direction: column;
  padding: 51px 41px;
}

.tabs {
  display: flex;
  align-items: center;
  gap: 22px;
}

.tab {
  position: relative;
  color: #b3b3b3;
  font-size: 25px;
  line-height: 32px;
}

.tab.active {
  color: #000;
  font-weight: 500;
}

.tab-badge {
  position: absolute;
  right: -27px;
  top: -10px;
  width: 26px;
  border-radius: 9px;
  background: #e95426;
  color: #fff;
  font-size: 15px;
  line-height: 18px;
  text-align: center;
}

.side-end {
  width: 37px;
  margin-left: auto;
}

.meta {
  display: flex;
  align-items: center;
  gap: 12px;
  margin-top: 18px;
  color: #999;
  line-height: 20px;
}

.meta-dot {
  width: 4px;
  height: 4px;
  border-radius: 50%;
  background: #999;
}

.folders {
  margin-top: 24px;
  padding-bottom: 14px;
  border-bottom: 1px solid #ececec;
}

.row {
  display: flex;
  align-items: center;
  gap: 16px;
  width: 100%;
  height: 52px;
  font-size: 20px;
  font-weight: 500;
}

.row svg {
  color: #bdbdbd;
}

.row.active,
.row.active svg {
  color: #3d3ad3;
}

.row.active {
  height: 57px;
}

.count {
  display: flex;
  justify-content: center;
  width: 37px;
  margin-left: auto;
  color: #bdbdbd;
  font-size: 18px;
  font-weight: 400;
  line-height: 26px;
}

.row.active .count {
  border-radius: 13px;
  background: #3d3ad3;
  color: #fff;
  font-weight: 500;
}

.show-more {
  color: #bdbdbd;
  font-size: 18px;
  font-weight: 400;
}

.section-head {
  display: flex;
  align-items: center;
}

.section-head h3 {
  font-size: 18px;
}

.labels-head {
  margin: 28px 0 14px;
}

.meetings {
  margin-top: auto;
  padding-top: 24px;
}

.meetings .section-head {
  margin-bottom: 30px;
}

.meeting {
  position: relative;
  display: flex;
  align-items: center;
  gap: 21px;
  padding: 19px;
  border: 1px solid #ececec;
  border-radius: 10px;
}

.meeting.next {
  margin-top: 16px;
  background: #fff;
  box-shadow: 0 30px 50px rgba(0, 0, 0, 0.07);
}

.meeting h4 {
  font-size: 18px;
}

.meeting p {
  display: flex;
  align-items: center;
  gap: 5px;
  color: #888;
  font-size: 16px;
}

.tile {
  display: flex;
  flex-direction: column;
  justify-content: center;
  width: 52px;
  height: 52px;
  border-radius: 9px;
  background: #ecebfb;
  color: #3d3ad3;
  text-align: center;
}

.tile b {
  font-size: 18px;
  line-height: 20px;
}

.tile span {
  font-size: 14px;
  line-height: 18px;
}

.done .tile {
  background: #f1f1f1;
  color: #555;
}

.done .tile,
.done h4,
.done p span {
  text-decoration: line-through;
}

.done h4 {
  color: #555;
}

.status {
  position: absolute;
  top: 14px;
  right: 14px;
  width: 8px;
  height: 8px;
  border-radius: 50%;
}

.status.red { background: #d35160; }
.status.green { background: #5bb46d; }

/* mail list */
.list {
  position: relative;
  border-right: 1px solid #efefef;
}

.list-top {
  padding: 30px 41px 39px 42px;
  border-bottom: 1px solid #ececec;
}

.contacts {
  display: flex;
  gap: 52px;
}

.contact {
  display: flex;
  flex-direction: column;
  align-items: center;
  gap: 13px;
  width: 52px;
  line-height: 20px;
}

.pager {
  display: flex;
  gap: 20px;
  margin: 12px 0 0 auto;
  align-self: flex-start;
}

.list-bar {
  display: flex;
  align-items: center;
  margin-top: 48px;
}

.list-title {
  margin-left: 11px;
  font-size: 20px;
  font-weight: 500;
}

.list-count {
  margin-left: 17px;
  color: #aaa;
}

.list-tools {
  display: flex;
  gap: 32px;
  margin-left: auto;
}

.mail {
  padding: 0 41px 0 42px;
}

.mail-in {
  display: flex;
  gap: 20px;
  padding: 20px 0;
  border-bottom: 1px solid #e9e9e9;
}

.mail:last-child .mail-in {
  border-bottom: none;
}

.mail.selected {
  position: relative;
  z-index: 2;
  border-bottom: 1px solid #ececec;
  background: #fff;
  box-shadow: 0 24px 60px rgba(0, 0, 0, 0.06);
}

.mail.selected .mail-in {
  border-bottom: none;
}

.mail.after-selected {
  position: relative;
  z-index: 3;
  padding-top: 12px;
}

.cursor {
  position: absolute;
  left: 289px;
  top: 134px;
  width: 20px;
  height: 24px;
  filter: drop-shadow(0 2px 2px rgba(0, 0, 0, 0.3));
}

.mail-lead {
  display: flex;
  align-items: center;
  gap: 22px;
  height: 52px;
}

.duo {
  position: relative;
  width: 52px;
  height: 52px;
}

.duo .av-j {
  position: absolute;
  right: 0;
  bottom: 0;
  box-shadow: 0 0 0 2px #fbfbfb;
}

.quad {
  display: grid;
  grid-template-columns: 23px 23px;
  gap: 6px;
  width: 52px;
}

.mail-body {
  flex: 1;
  min-width: 0;
}

.mail-head {
  display: flex;
  align-items: center;
  justify-content: space-between;
  line-height: 27px;
}

.mail-head h3 {
  display: flex;
  align-items: center;
  gap: 5px;
  font-size: 18px;
}

.unread h3 {
  gap: 9px;
  font-weight: 600;
}

.new-dot {
  width: 8px;
  height: 8px;
  margin-left: 1px;
  border-radius: 50%;
  background: #e95426;
}

.new-count {
  min-width: 18px;
  margin-left: 6px;
  padding: 0 5px;
  border-radius: 9px;
  background: #e95426;
  color: #fff;
  font-size: 13px;
  font-weight: 400;
  line-height: 18px;
}

.when {
  display: flex;
  align-items: center;
  gap: 4px;
  color: #8c8c8c;
}

.when b {
  color: #222;
  font-weight: 500;
}

.when svg {
  margin-right: 8px;
}

.subject {
  font-size: 16px;
  font-weight: 500;
  line-height: 28px;
}

.preview {
  overflow: hidden;
  color: #8c8c8c;
  font-size: 16px;
  line-height: 28px;
  text-overflow: ellipsis;
  white-space: nowrap;
}

.chips {
  display: flex;
  gap: 16px;
  margin-top: 15px;
}

.chip-gap {
  flex: 1;
}

.chip {
  display: flex;
  align-items: center;
  height: 30px;
  padding: 0 11px 0 9px;
  border-radius: 7px;
  background: #f7f7f7;
  color: #222;
}

.chip .sq {
  margin-right: 10px;
}

.chip.label-work { background: #f7eafd; }
.chip.label-events { background: #eaf5fc; }
.chip.label-apps { background: #fdf6e4; }

.chip.label-work .sq,
.chip.label-events .sq,
.chip.label-apps .sq {
  background: none;
}

.chip.files {
  gap: 4px;
  padding: 0 10px 0 8px;
}

.chip.files svg {
  color: #000;
}

.chip.files.wide {
  gap: 12px;
}

.chip.tag {
  gap: 11px;
  padding: 0 11px 0 5px;
}

.chip.tag svg {
  width: 20px;
  height: 20px;
  padding: 2px;
  border-radius: 4px;
  background: #f0f0f0;
  color: #666;
}

.chip.more {
  padding: 0 9px;
}

/* thread */
.detail {
  display: flex;
  flex-direction: column;
  background: #fcfcfc;
}

.thread {
  flex: 1;
  padding: 35px 38px 35px 40px;
}

.thread-tools {
  display: flex;
  align-items: center;
}

.tools {
  display: flex;
  gap: 32px;
}

.thread-tools .tools {
  margin: 0 auto 0 6px;
}

.pick {
  position: relative;
  display: flex;
  align-items: center;
  gap: 10px;
  width: 128px;
  height: 32px;
  padding: 0 4px;
  border: 1px solid #eee;
  border-radius: 16px;
  background: #fff;
  color: #222;
}

.pick-work {
  width: 132px;
  margin-left: 20px;
  padding: 0 9px;
  border-color: #f7eafd;
  background: #f7eafd;
}

.pick-work .sq {
  background: none;
}

.pick-count {
  width: 21px;
  border-radius: 50%;
  background: #f0f0f0;
  font-size: 13px;
  font-weight: 500;
  line-height: 21px;
  text-align: center;
}

.pick select {
  appearance: none;
  flex: 1;
  min-width: 0;
  padding: 0;
  border: none;
  background: none;
}

.pick-arrow {
  position: absolute;
  right: 12px;
  top: 9px;
  width: 12px;
  height: 12px;
  pointer-events: none;
}

.thread-head {
  display: flex;
  gap: 16px;
  margin-top: 56px;
  padding-bottom: 20px;
  border-bottom: 1px solid #ececec;
}

.thread-info {
  flex: 1;
}

.thread-title {
  display: flex;
  align-items: center;
}

.thread-title h2 {
  margin: 0 16px 0 9px;
  font-size: 18px;
}

.thread-count {
  margin-left: auto;
  color: #8c8c8c;
}

.thread-to {
  display: flex;
  gap: 16px;
  margin-top: 2px;
  color: #8c8c8c;
}

.thread-to b {
  color: #000;
}

.thread-tags {
  display: flex;
  align-items: center;
  gap: 16px;
  margin: 20px 0 32px;
}

.tag-btn {
  margin: 0 4px 0 auto;
}

.msg {
  padding: 18px 20px 17px;
  border: 1px solid #ececec;
}

.msg.old {
  border-radius: 10px 10px 0 0;
}

.msg.latest {
  padding-bottom: 26px;
  border-radius: 0 0 10px 10px;
  background: #fff;
}

.msg-head {
  display: flex;
  align-items: center;
}

.msg-head > b {
  margin-left: 11px;
}

.msg-to {
  margin: 0 16px;
  color: #8c8c8c;
}

.msg-to b {
  color: #000;
}

.msg-when {
  margin-left: auto;
  color: #999;
}

.msg-when b {
  color: #222;
  font-weight: 400;
}

.msg-actions {
  display: flex;
  gap: 17px;
  margin-left: 32px;
}

.msg-text {
  margin-top: 20px;
  padding-right: 30px;
  color: #444;
  font-size: 16px;
}

.old .msg-head,
.old .msg-when,
.old .msg-to b {
  color: #777;
}

.old .msg-to {
  color: #bbb;
}

.one-line {
  overflow: hidden;
  margin-top: 13px;
  padding-right: 0;
  color: #b3b3b3;
  text-overflow: ellipsis;
  white-space: nowrap;
}

.older {
  display: flex;
  align-items: center;
  margin: 15px 0;
}

.older::before,
.older::after {
  content: "";
  flex: 1;
  height: 1px;
  background: #ececec;
}

.older-btn {
  display: flex;
  align-items: center;
  height: 31px;
  padding: 0 13px 0 9px;
  border-radius: 16px;
  background: #efefef;
  color: #222;
}

.older-btn svg {
  margin-left: 15px;
}

.older-count {
  width: 21px;
  margin-right: 9px;
  border-radius: 50%;
  background: #000;
  color: #fff;
  font-size: 13px;
  line-height: 21px;
}

.files-head {
  display: flex;
  align-items: center;
  justify-content: space-between;
  margin: 28px 0 17px;
}

.files-head h3 {
  font-size: 18px;
}

.files-head a {
  color: #3d3ad3;
}

.files {
  display: flex;
  flex-wrap: wrap;
  gap: 15px;
}

.file {
  display: flex;
  align-items: center;
  gap: 16px;
  height: 42px;
  padding: 0 16px;
  border: 1px solid #eee;
  border-radius: 21px;
  background: #fff;
  color: #222;
}

.file-ic {
  width: 19px;
  height: 19px;
  border-radius: 3px;
  background: #e95426;
  color: #fff;
  font-size: 8px;
  font-weight: 600;
  line-height: 19px;
  text-align: center;
}

.file-video {
  width: 20px;
  height: 16px;
  color: #3d3ad3;
}

/* composer */
.composer {
  border-top: 1px solid #ececec;
  background: #fff;
}

.composer-head {
  display: flex;
  align-items: center;
  padding: 29px 26px 0 32px;
}

.reply-btn {
  color: #777;
}

.to-pill {
  display: flex;
  align-items: center;
  overflow: hidden;
  height: 32px;
  margin-left: 20px;
  border: 1px solid #eee;
  border-radius: 16px;
}

.to-label {
  padding: 0 11px;
  background: #efefef;
  color: #8c8c8c;
  line-height: 32px;
}

.to-name {
  display: flex;
  align-items: center;
  gap: 11px;
  padding: 0 11px 0 9px;
  color: #222;
}

.subject-input {
  flex: 1;
  min-width: 0;
  margin-right: 20px;
  padding: 0;
  border: none;
  outline: none;
  background: none;
  text-align: right;
}

.subject-input::placeholder {
  color: #999;
}

.editor {
  min-height: 212px;
  padding: 26px 32px 0 31px;
  color: #444;
  font-size: 16px;
  line-height: 27px;
}

.mention {
  display: inline-flex;
  align-items: center;
  gap: 6px;
  margin-left: 5px;
  padding-right: 8px;
  border-radius: 11px;
  background: #f7f7f7;
  color: #111;
  line-height: 22px;
}

.caret {
  display: inline-block;
  width: 1px;
  height: 20px;
  margin-left: 3px;
  background: #ccc;
  vertical-align: middle;
}

.composer-bar {
  display: flex;
  align-items: center;
  padding: 15px 27px 14px 31px;
  border-top: 1px solid #ececec;
}

.send {
  display: flex;
  align-items: center;
  justify-content: space-between;
  width: 124px;
  height: 42px;
  margin-right: 31px;
  padding: 0 16px;
  border-radius: 21px;
  background: #3d3ad3;
  color: #fff;
  font-size: 18px;
}

.discard {
  margin-left: auto;
}
```
